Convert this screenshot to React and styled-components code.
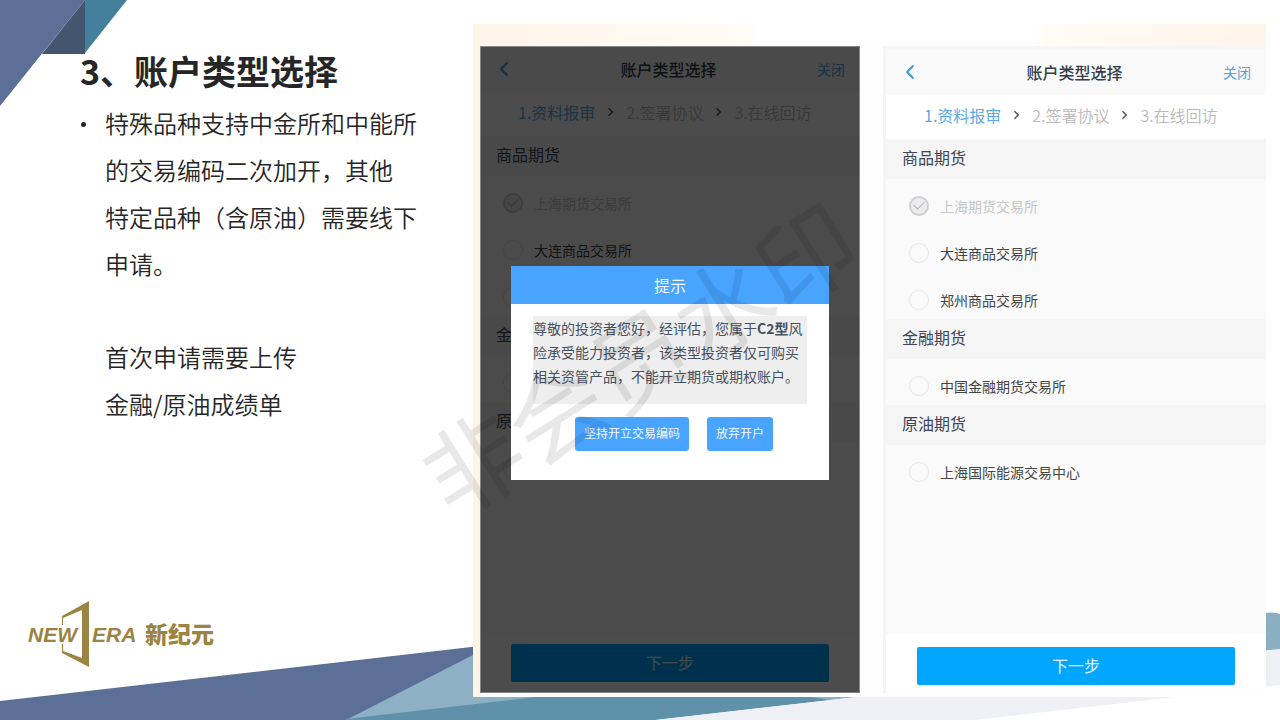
import React, { useState } from 'react';
import styled, { createGlobalStyle, css } from 'styled-components';
import { ChevronLeft } from 'lucide-react';

const STEPS = ['1.资料报审', '2.签署协议', '3.在线回访'];

const GROUPS = [
    {
        title: '商品期货',
        items: [
            { name: '上海期货交易所', opened: true },
            { name: '大连商品交易所' },
            { name: '郑州商品交易所' },
        ],
    },
    { title: '金融期货', items: [{ name: '中国金融期货交易所' }] },
    { title: '原油期货', items: [{ name: '上海国际能源交易中心' }] },
];

const Backdrop = () => (
    <BackdropSvg viewBox="0 0 1280 720" preserveAspectRatio="none" aria-hidden="true">
        <polygon points="0,0 85,0 0,106" fill="#5c7097" />
        <polygon points="85,0 85,54 42,54" fill="#445570" />
        <polygon points="85,0 127,0 85,53" fill="#447f9e" />
        <polygon points="0,701 480,646 480,720 0,720" fill="#5c7097" />
        <polygon points="346,720 473,655 860,655 857,697 655,720" fill="#8db0c4" />
        <polygon points="346,719 535,697 810,697 830,700 655,720 346,720" fill="#6091ab" />
        <polygon points="655,720 1280,649 1280,685 975,720" fill="#eff0f6" />
        <path d="M1260 614 Q1273 611 1280 614 V649 L1260 651 Z" fill="#8aafc3" />
    </BackdropSvg>
);

const Logo = () => (
    <LogoSvg viewBox="0 0 194 66" role="img" aria-label="NEW ERA 新纪元">
        <path d="M34 24 V15 L61 0 V66 L34 52 V43 H35 V50 L54 57 V9 L35 17 V24 Z" fill="#9b8343" />
        <LogoLatin x="0" y="41">NEW</LogoLatin>
        <LogoLatin x="64" y="41">ERA</LogoLatin>
        <LogoHan x="117" y="42">新纪元</LogoHan>
    </LogoSvg>
);

const StepArrow = () => (
    <svg width="7" height="10" viewBox="0 0 7 10" fill="none" aria-hidden="true">
        <path d="M1.5 1.2 L5.3 5 L1.5 8.8" stroke="#555" strokeWidth="1.5" />
    </svg>
);

const AccountTypeScreen = ({ id, framed, children }) => {
    const [selected, setSelected] = useState([]);

    const toggle = (name) => {
        setSelected((prev) =>
            prev.includes(name) ? prev.filter((n) => n !== name) : [...prev, name]
        );
    };

    return (
        <Phone $framed={framed}>
            <NavBar>
                <BackButton aria-label="返回">
                    <ChevronLeft size={24} strokeWidth={2} />
                </BackButton>
                <NavTitle>账户类型选择</NavTitle>
                <CloseButton>关闭</CloseButton>
            </NavBar>
            <Steps>
                {STEPS.map((step, i) => (
                    <React.Fragment key={step}>
                        {i > 0 && <StepArrow />}
                        <Step $active={i === 0}>{step}</Step>
                    </React.Fragment>
                ))}
            </Steps>
            <Groups>
                {GROUPS.map((group) => (
                    <section key={group.title}>
                        <GroupTitle>{group.title}</GroupTitle>
                        <Options>
                            {group.items.map(({ name, opened }) => (
                                <Option key={name} htmlFor={`${id}-${name}`} $disabled={opened}>
                                    <Tick
                                        id={`${id}-${name}`}
                                        type="checkbox"
                                        disabled={opened}
                                        checked={opened || selected.includes(name)}
                                        onChange={() => toggle(name)}
                                    />
                                    {name}
                                </Option>
                            ))}
                        </Options>
                    </section>
                ))}
            </Groups>
            <Footer $framed={framed}>
                <NextButton>下一步</NextButton>
            </Footer>
            {children}
        </Phone>
    );
};

const RiskDialog = () => (
    <Overlay>
        <Dialog role="dialog" aria-labelledby="risk-title">
            <DialogTitle id="risk-title">提示</DialogTitle>
            <DialogBody>
                <Message>
                    尊敬的投资者您好，经评估，您属于<b>C2型</b>风险承受能力投资者，该类型投资者仅可购买相关资管产品，不能开立期货或期权账户。
                </Message>
                <Actions>
                    <DialogButton>坚持开立交易编码</DialogButton>
                    <DialogButton>放弃开户</DialogButton>
                </Actions>
            </DialogBody>
        </Dialog>
    </Overlay>
);

const App = () => (
    <>
        <GlobalStyle />
        <Slide>
            <Backdrop />
            <Notes>
                <Title>3、账户类型选择</Title>
                <Bullets>
                    <li>
                        特殊品种支持中金所和中能所
                        <br />
                        的交易编码二次加开，其他
                        <br />
                        特定品种（含原油）需要线下
                        <br />
                        申请。
                        <Extra>
                            首次申请需要上传
                            <br />
                            金融/原油成绩单
                        </Extra>
                    </li>
                </Bullets>
                <Logo />
            </Notes>
            <Shots>
                <AccountTypeScreen id="asked">
                    <RiskDialog />
                </AccountTypeScreen>
                <AccountTypeScreen id="plain" framed />
            </Shots>
            <Watermark>非会员水印</Watermark>
        </Slide>
    </>
);

export default App;

const GlobalStyle = createGlobalStyle`
  * {
    box-sizing: border-box;
  }

  body {
    margin: 0;
    background: #fff;
    font-family: 'Noto Sans CJK SC', sans-serif;
  }

  button {
    padding: 0;
    border: none;
    background: none;
    font-family: inherit;
    cursor: pointer;
  }
`;

const Slide = styled.main`
  position: relative;
  display: grid;
  grid-template-columns: 473fr 793fr;
  min-height: 100vh;
  padding-right: 14px;
  overflow: hidden;
`;

const BackdropSvg = styled.svg`
  position: absolute;
  inset: 0;
  width: 100%;
  height: 100%;
`;

const Notes = styled.div`
  position: relative;
  display: flex;
  flex-direction: column;
  padding: 47px 0 53px 28px;
  color: #262626;
`;

const Title = styled.h1`
  margin: 0 0 4px 52px;
  font-size: 34px;
  font-weight: 700;
  line-height: 48px;
`;

const Bullets = styled.ul`
  margin: 0 0 0 52px;
  padding: 0;
  list-style: none;
  font-size: 24px;
  font-weight: 350;
  line-height: 47px;
  white-space: nowrap;

  li {
    position: relative;
    padding-left: 25px;
  }

  li::before {
    content: '';
    position: absolute;
    top: 23px;
    left: 1px;
    width: 5px;
    height: 5px;
    border-radius: 50%;
    background: #262626;
  }
`;

const Extra = styled.p`
  margin: 46px 0 0;
`;

const LogoSvg = styled.svg`
  width: 194px;
  height: 66px;
  margin-top: auto;
`;

const LogoLatin = styled.text`
  fill: #9b8343;
  font-family: 'Liberation Sans', sans-serif;
  font-size: 21px;
  font-style: italic;
  font-weight: 700;
`;

const LogoHan = styled.text`
  fill: #9b8343;
  font-size: 23px;
  font-weight: 900;
`;

const Shots = styled.div`
  position: relative;
  display: grid;
  grid-template-columns: 380fr 383fr;
  gap: 23px;
  margin: 24px 0 23px;
  padding: 22px 0 4px 7px;
  background:
    linear-gradient(#fff4e6, #fff4e6) left / 7px 100% no-repeat,
    linear-gradient(90deg, #fff4ea, #fffcf5 35%, #fff 36%, #fff 71%, #fffcf5 72%, #fff4ea) top / 100% 22px no-repeat,
    #fffefe;
`;

const Phone = styled.div`
  position: relative;
  display: flex;
  flex-direction: column;
  background: #fafafa;

  ${({ $framed }) =>
      $framed &&
      css`
        border-top: 3px solid #f6f6f7;
        border-left: 3px solid #f3f3fa;
      `}
`;

const NavBar = styled.header`
  display: grid;
  grid-template-columns: 1fr auto 1fr;
  align-items: center;
  height: 46px;
  padding: 0 15px 0 12px;
  background: #f9f9fa;
`;

const BackButton = styled.button`
  display: flex;
  justify-self: start;
  color: #3f9be6;
`;

const NavTitle = styled.h2`
  margin: 0;
  color: #343d4a;
  font-size: 16px;
  font-weight: 500;
  line-height: 24px;
`;

const CloseButton = styled.button`
  justify-self: end;
  color: #559fdc;
  font-size: 14px;
  line-height: 24px;
`;

const Steps = styled.div`
  display: flex;
  align-items: center;
  gap: 12px;
  height: 44px;
  padding: 0 38px 4px;
  background: #fff;
`;

const Step = styled.span`
  color: ${({ $active }) => ($active ? '#5aa9e6' : '#b9b9b9')};
  font-size: 16px;
  font-weight: ${({ $active }) => ($active ? 400 : 350)};
  line-height: 24px;
  white-space: nowrap;
`;

const Groups = styled.div`
  flex: 1;
`;

const GroupTitle = styled.h3`
  margin: 0;
  padding: 0 16px 4px;
  background: #f5f5f5;
  color: #3c4656;
  font-size: 16px;
  font-weight: 400;
  line-height: 36px;
`;

const Options = styled.div`
  display: grid;
  gap: 8px;
  padding: 7px 23px 0;
`;

const Option = styled.label`
  display: flex;
  align-items: center;
  gap: 11px;
  height: 39px;
  color: ${({ $disabled }) => ($disabled ? '#c6c6c6' : '#444')};
  font-size: 14px;
`;

const Tick = styled.input`
  appearance: none;
  display: grid;
  place-items: center;
  width: 20px;
  height: 20px;
  margin: 0;
  border: 1px solid #e6e6e6;
  border-radius: 50%;

  &:checked {
    border: 2px solid #cfcfd1;
    background: #ececee;
  }

  &:checked::before {
    content: '';
    width: 9px;
    height: 5px;
    margin-bottom: 3px;
    border: solid #b4b4b6;
    border-width: 0 0 1px 1px;
    transform: rotate(-45deg);
  }
`;

const Footer = styled.footer`
  padding: ${({ $framed }) => ($framed ? '13px 31px 8px' : '10px 31px 11px')};
  background: #fff;
`;

const NextButton = styled.button`
  display: block;
  width: 100%;
  height: 38px;
  padding-bottom: 3px;
  border-radius: 2px;
  background: #00a6ff;
  color: #e2f4ff;
  font-size: 16px;
`;

const Overlay = styled.div`
  position: absolute;
  inset: 0;
  display: flex;
  align-items: center;
  padding: 6px 30px 0;
  border: 1px solid #858585;
  background: rgba(0, 0, 0, 0.7);
`;

const Dialog = styled.div`
  flex: 1;
  background: #fff;
`;

const DialogTitle = styled.h3`
  margin: 0;
  background: #48a4ff;
  color: #f4faff;
  font-size: 16px;
  font-weight: 400;
  line-height: 38px;
  text-align: center;
`;

const DialogBody = styled.div`
  padding: 12px 22px 29px;
`;

const Message = styled.p`
  min-height: 88px;
  margin: 0;
  background: #eee;
  color: #475061;
  font-size: 14px;
  line-height: 24px;
`;

const Actions = styled.div`
  display: flex;
  justify-content: center;
  gap: 18px;
  margin-top: 13px;
  padding-left: 8px;
`;

const DialogButton = styled.button`
  height: 34px;
  padding: 0 9px 2px;
  border-radius: 3px;
  background: #48a4ff;
  color: #f0f8ff;
  font-size: 12px;
`;

const Watermark = styled.div`
  position: absolute;
  inset: 0;
  display: grid;
  place-items: center;
  padding-bottom: 12px;
  color: rgba(0, 0, 0, 0.09);
  font-size: 98px;
  white-space: nowrap;
  transform: rotate(-32deg);
  pointer-events: none;
`;
